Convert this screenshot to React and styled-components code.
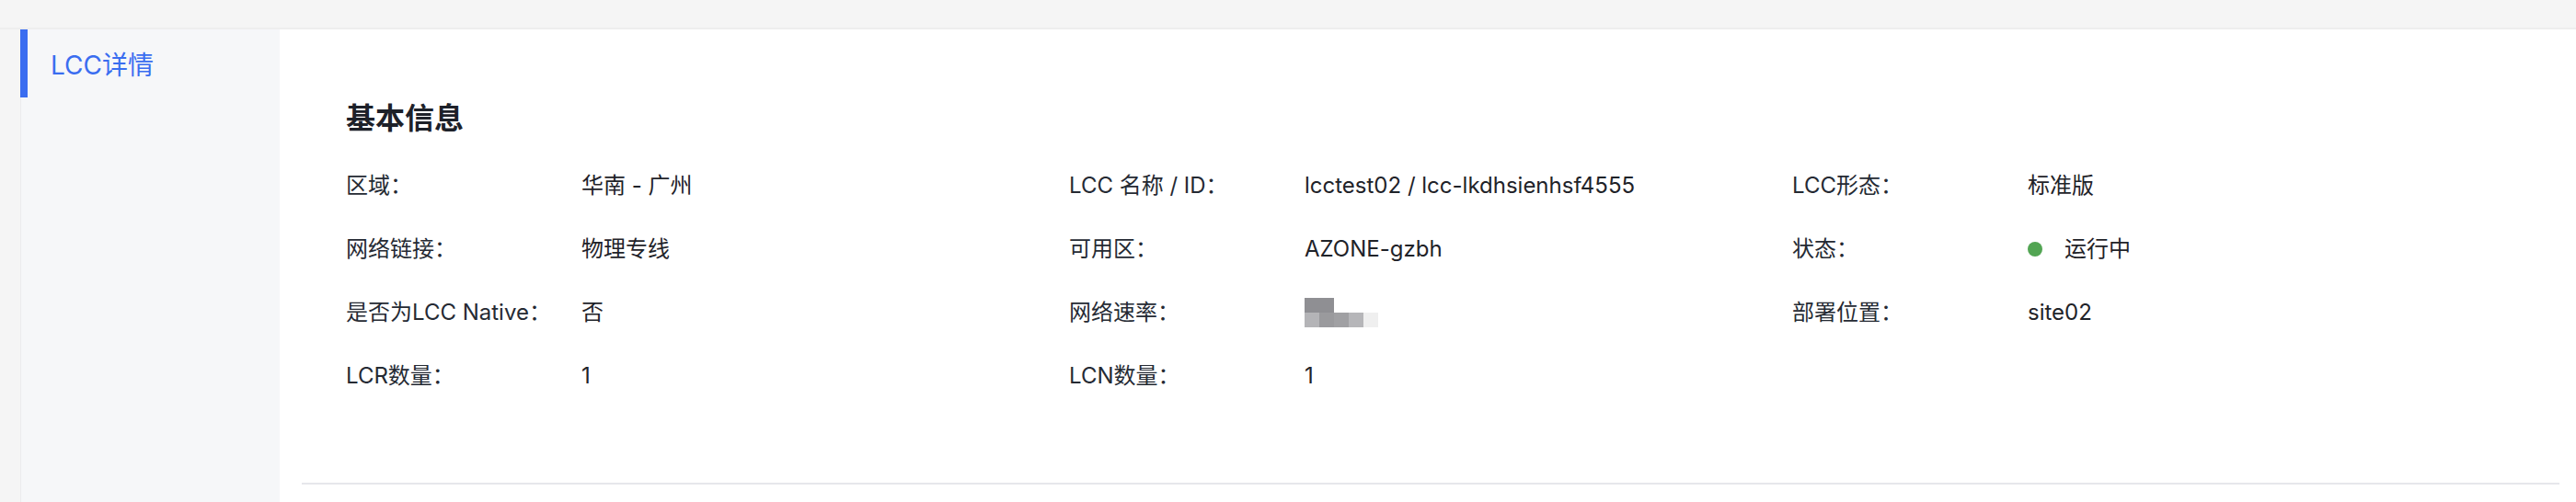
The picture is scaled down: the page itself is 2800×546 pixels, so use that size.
import React from 'react';
import styled, { createGlobalStyle } from 'styled-components';

const GlobalStyle = createGlobalStyle`
    html, body {
        margin: 0;
        padding: 0;
        background: #f5f5f5;
    }
    body {
        font-family: Inter, "Noto Sans CJK SC", sans-serif;
        color: #1f2329;
    }
`;

const Page = styled.div`
    display: flex;
    flex-direction: column;
    min-height: 100vh;
`;

const TopBar = styled.div`
    height: 30px;
    background: #f5f5f5;
    border-bottom: 2px solid #eeeeee;
`;

const Body = styled.div`
    flex: 1;
    display: flex;
`;

const Sidebar = styled.nav`
    width: 282px;
    margin-left: 22px;
    background: #f6f7f9;
    box-shadow: inset 1px 0 0 #ececee;
`;

const NavItem = styled.div`
    height: 74px;
    display: flex;
    align-items: center;
    padding-left: 25px;
    border-left: 8px solid ${props => (props.active ? '#3a6df0' : 'transparent')};
    color: ${props => (props.active ? '#3a6df0' : '#333')};
    font-size: 28px;
`;

const Main = styled.main`
    flex: 1;
    background: #fff;
    padding: 0 18px 0 24px;
`;

const Section = styled.section`
    padding: 75px 48px 96px;
    border-bottom: 2px solid #e6e7eb;
`;

const Title = styled.h2`
    margin: 0 0 31px;
    font-size: 32px;
    line-height: 44px;
    font-weight: 600;
    color: #1d2129;
`;

const InfoGrid = styled.div`
    display: grid;
    grid-template-columns: repeat(3, 1fr);
    row-gap: 29px;
`;

const Item = styled.div`
    display: flex;
    align-items: center;
    height: 40px;
    font-size: 24px;
    line-height: 40px;
`;

const Label = styled.span`
    width: 256px;
    flex-shrink: 0;
    color: #252a33;
`;

const Value = styled.span`
    display: flex;
    align-items: center;
    color: #1f2329;
`;

const Dot = styled.span`
    width: 16px;
    height: 16px;
    border-radius: 50%;
    background: ${props => props.color};
    margin-right: 24px;
`;

const Mosaic = () => {
    const cells = [
        ['#8f8f93', '#8f8f93', null, null, null],
        ['#b4b4b7', '#9a9a9d', '#a0a0a3', '#b6b6b9', '#efefef'],
    ];
    return (
        <svg width="80" height="32" viewBox="0 0 80 32">
            {cells.map((row, r) =>
                row.map((c, i) =>
                    c ? <rect key={`${r}-${i}`} x={i * 16} y={r * 16} width="16" height="16" fill={c} /> : null
                )
            )}
        </svg>
    );
};

const items = [
    { label: '区域：', value: '华南 - 广州' },
    { label: 'LCC 名称 / ID：', value: 'lcctest02 / lcc-lkdhsienhsf4555' },
    { label: 'LCC形态：', value: '标准版' },
    { label: '网络链接：', value: '物理专线' },
    { label: '可用区：', value: 'AZONE-gzbh' },
    { label: '状态：', value: '运行中', status: '#52a553' },
    { label: '是否为LCC Native：', value: '否' },
    { label: '网络速率：', masked: true },
    { label: '部署位置：', value: 'site02' },
    { label: 'LCR数量：', value: '1' },
    { label: 'LCN数量：', value: '1' },
];

const App = () => (
    <Page>
        <GlobalStyle />
        <TopBar />
        <Body>
            <Sidebar>
                <NavItem active>LCC详情</NavItem>
            </Sidebar>
            <Main>
                <Section>
                    <Title>基本信息</Title>
                    <InfoGrid>
                        {items.map(item => (
                            <Item key={item.label}>
                                <Label>{item.label}</Label>
                                <Value>
                                    {item.status && <Dot color={item.status} />}
                                    {item.masked ? <Mosaic /> : item.value}
                                </Value>
                            </Item>
                        ))}
                    </InfoGrid>
                </Section>
            </Main>
        </Body>
    </Page>
);

export default App;
